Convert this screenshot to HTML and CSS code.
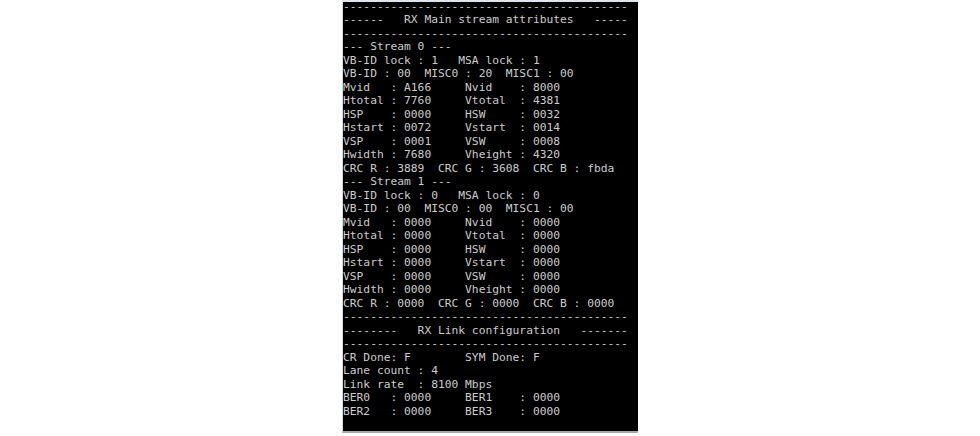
FILE: index.html
```html
<!DOCTYPE html>
<html>
<head>
<meta charset="utf-8">
<link rel="stylesheet" href="styles.css">
</head>
<body>
<div class="page">
<div class="screen">
<pre class="console">------------------------------------------
------   RX Main stream attributes   -----
------------------------------------------
--- Stream 0 ---
VB-ID lock : 1   MSA lock : 1
VB-ID : 00  MISC0 : 20  MISC1 : 00
Mvid   : A166     Nvid    : 8000
Htotal : 7760     Vtotal  : 4381
HSP    : 0000     HSW     : 0032
Hstart : 0072     Vstart  : 0014
VSP    : 0001     VSW     : 0008
Hwidth : 7680     Vheight : 4320
CRC R : 3889  CRC G : 3608  CRC B : fbda
--- Stream 1 ---
VB-ID lock : 0   MSA lock : 0
VB-ID : 00  MISC0 : 00  MISC1 : 00
Mvid   : 0000     Nvid    : 0000
Htotal : 0000     Vtotal  : 0000
HSP    : 0000     HSW     : 0000
Hstart : 0000     Vstart  : 0000
VSP    : 0000     VSW     : 0000
Hwidth : 0000     Vheight : 0000
CRC R : 0000  CRC G : 0000  CRC B : 0000
------------------------------------------
--------   RX Link configuration   -------
------------------------------------------
CR Done: F        SYM Done: F
Lane count : 4
Link rate  : 8100 Mbps
BER0   : 0000     BER1    : 0000
BER2   : 0000     BER3    : 0000</pre>
</div>
</div>
</body>
</html>
```

FILE: styles.css
```css
html, body {
  margin: 0;
  padding: 0;
  background: #ffffff;
}

.page {
  display: flex;
  justify-content: center;
  width: 980px;
  height: 436px;
}

.screen {
  box-sizing: border-box;
  width: 296px;
  height: 433px;
  background: #000000;
  border-top: 2px solid #dfe5ec;
  border-left: 1px solid #d6d6d6;
  border-bottom: 2px solid #a9a9a9;
  overflow: hidden;
}

.console {
  margin: -2.5px 0 0 0;
  padding: 0;
  font-family: "DejaVu Sans Mono", "Liberation Mono", monospace;
  font-size: 11.28px;
  line-height: 13.5px;
  color: #cccccc;
  white-space: pre;
}
```
